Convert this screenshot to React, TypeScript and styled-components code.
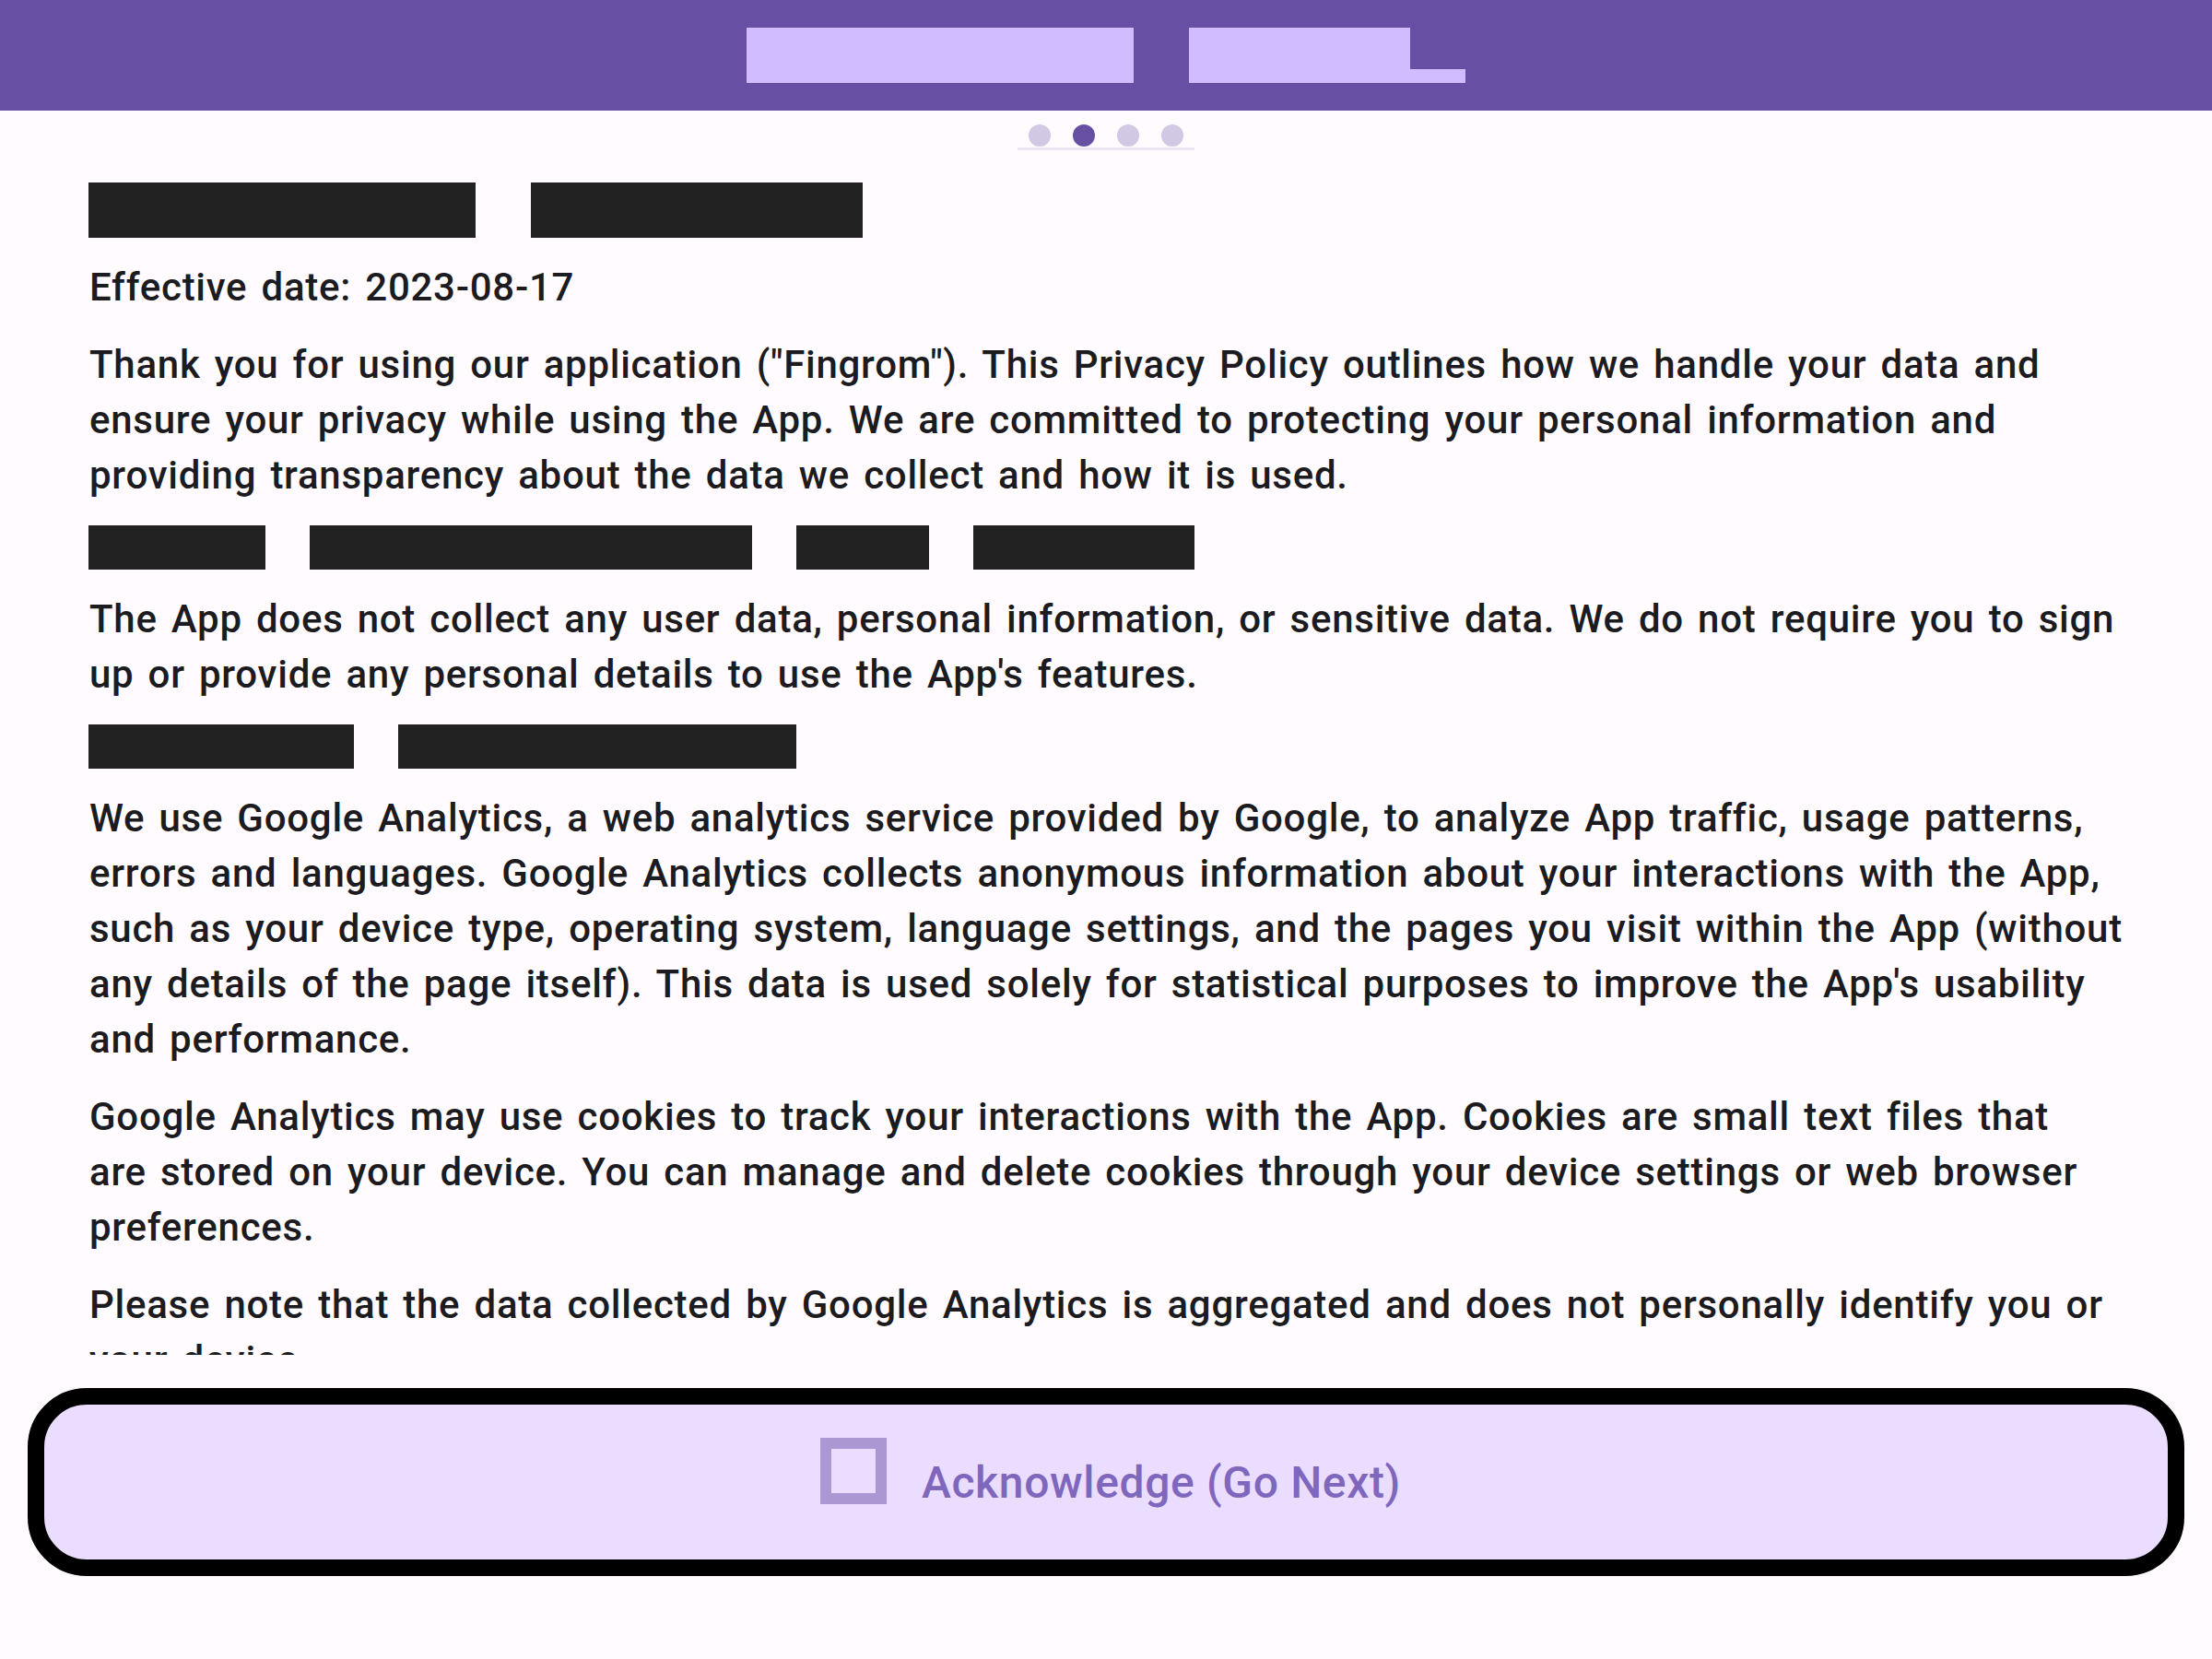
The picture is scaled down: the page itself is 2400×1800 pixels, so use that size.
import React from "react";
import styled, { createGlobalStyle } from "styled-components";

const GlobalStyle = createGlobalStyle`
  html,
  body {
    margin: 0;
    padding: 0;
    background: #fffbfe;
  }
  body {
    font-family: Roboto, "Liberation Sans", sans-serif;
  }
`;

const Screen = styled.div`
  display: flex;
  flex-direction: column;
  height: 1800px;
  background: #fffbfe;
  overflow: hidden;
`;

const TopBar = styled.header`
  flex-shrink: 0;
  height: 120px;
  background: #6750a4;
  display: flex;
  align-items: center;
  justify-content: center;
  gap: 60px;
`;

// app title, hidden behind light redaction boxes
const TitleBlock = styled.span<{ $w: number; $tail?: number }>`
  position: relative;
  display: block;
  width: ${(p) => p.$w}px;
  height: 60px;
  margin-right: ${(p) => p.$tail || 0}px;
  background: #d0bcff;

  &::after {
    content: "";
    display: ${(p) => (p.$tail ? "block" : "none")};
    position: absolute;
    left: 100%;
    bottom: 0;
    width: ${(p) => p.$tail || 0}px;
    height: 15px;
    background: #d0bcff;
  }
`;

const Stepper = styled.nav`
  flex-shrink: 0;
  display: flex;
  flex-direction: column;
  align-items: center;
  padding-top: 15px;
`;

const Dots = styled.div`
  display: flex;
  gap: 24px;
`;

const Dot = styled.span<{ $active?: boolean }>`
  width: 24px;
  height: 24px;
  border-radius: 50%;
  background: ${(p) => (p.$active ? "#6750a4" : "#d1c8e3")};
`;

const Track = styled.div`
  margin-top: 1px;
  width: 192px;
  height: 3px;
  background: #ebe6f2;
`;

const Content = styled.main`
  flex: 1;
  min-height: 0;
  overflow: hidden;
  padding: 35px 94px 0 97px;
  color: #1c1b1f;
`;

const Heading = styled.div<{ $size: number }>`
  display: flex;
  gap: ${(p) => p.$size}px;
  height: ${(p) => p.$size}px;
  margin: 0 0 24px -1px;
`;

const Redacted = styled.span<{ $w: number }>`
  display: block;
  width: ${(p) => p.$w}px;
  height: 100%;
  background: #222222;
`;

const Para = styled.p`
  margin: 0 0 24px;
  font-size: 42px;
  font-weight: 500;
  line-height: 60px;
  letter-spacing: 0.74px;
  word-spacing: 4px;
`;

const Footer = styled.footer`
  flex-shrink: 0;
  padding: 36px 30px 90px;
`;

const AckButton = styled.button`
  box-sizing: border-box;
  width: 100%;
  height: 204px;
  padding: 0 0 0 10px;
  border: 18px solid #000000;
  border-radius: 64px;
  background: #eaddff;
  display: flex;
  align-items: center;
  justify-content: center;
  gap: 38px;
  color: #7f67be;
  font-family: Roboto, "Liberation Sans", sans-serif;
  font-size: 48px;
  font-weight: 500;
  letter-spacing: 0.65px;
  cursor: pointer;
`;

const CheckBox = styled.span`
  box-sizing: border-box;
  width: 72px;
  height: 72px;
  margin-bottom: 24px;
  border: 12px solid #ab98d2;
`;

const headings = {
  title: [420, 360],
  collection: [192, 480, 144, 240],
  analytics: [288, 432],
};

export default function App() {
  return (
    <>
      <GlobalStyle />
      <Screen>
        <TopBar>
          <TitleBlock $w={420} />
          <TitleBlock $w={240} $tail={60} />
        </TopBar>

        <Stepper>
          <Dots>
            <Dot />
            <Dot $active />
            <Dot />
            <Dot />
          </Dots>
          <Track />
        </Stepper>

        <Content>
          <Heading $size={60}>
            {headings.title.map((w, i) => (
              <Redacted key={i} $w={w} />
            ))}
          </Heading>
          <Para>Effective date: 2023-08-17</Para>
          <Para>
            Thank you for using our application ("Fingrom"). This Privacy Policy outlines how we
            handle your data and ensure your privacy while using the App. We are committed to
            protecting your personal information and providing transparency about the data we
            collect and how it is used.
          </Para>

          <Heading $size={48}>
            {headings.collection.map((w, i) => (
              <Redacted key={i} $w={w} />
            ))}
          </Heading>
          <Para>
            The App does not collect any user data, personal information, or sensitive data. We do
            not require you to sign up or provide any personal details to use the App's features.
          </Para>

          <Heading $size={48}>
            {headings.analytics.map((w, i) => (
              <Redacted key={i} $w={w} />
            ))}
          </Heading>
          <Para>
            We use Google Analytics, a web analytics service provided by Google, to analyze App
            traffic, usage patterns, errors and languages. Google Analytics collects anonymous
            information about your interactions with the App, such as your device type, operating
            system, language settings, and the pages you visit within the App (without any details
            of the page itself). This data is used solely for statistical purposes to improve the
            App's usability and performance.
          </Para>
          <Para>
            Google Analytics may use cookies to track your interactions with the App. Cookies are
            small text files that
            <br />
            are stored on your device. You can manage and delete cookies through your device
            settings or web browser preferences.
          </Para>
          <Para>
            Please note that the data collected by Google Analytics is aggregated and does not
            personally identify you or your device.
          </Para>
        </Content>

        <Footer>
          <AckButton type="button">
            <CheckBox />
            Acknowledge (Go Next)
          </AckButton>
        </Footer>
      </Screen>
    </>
  );
}
